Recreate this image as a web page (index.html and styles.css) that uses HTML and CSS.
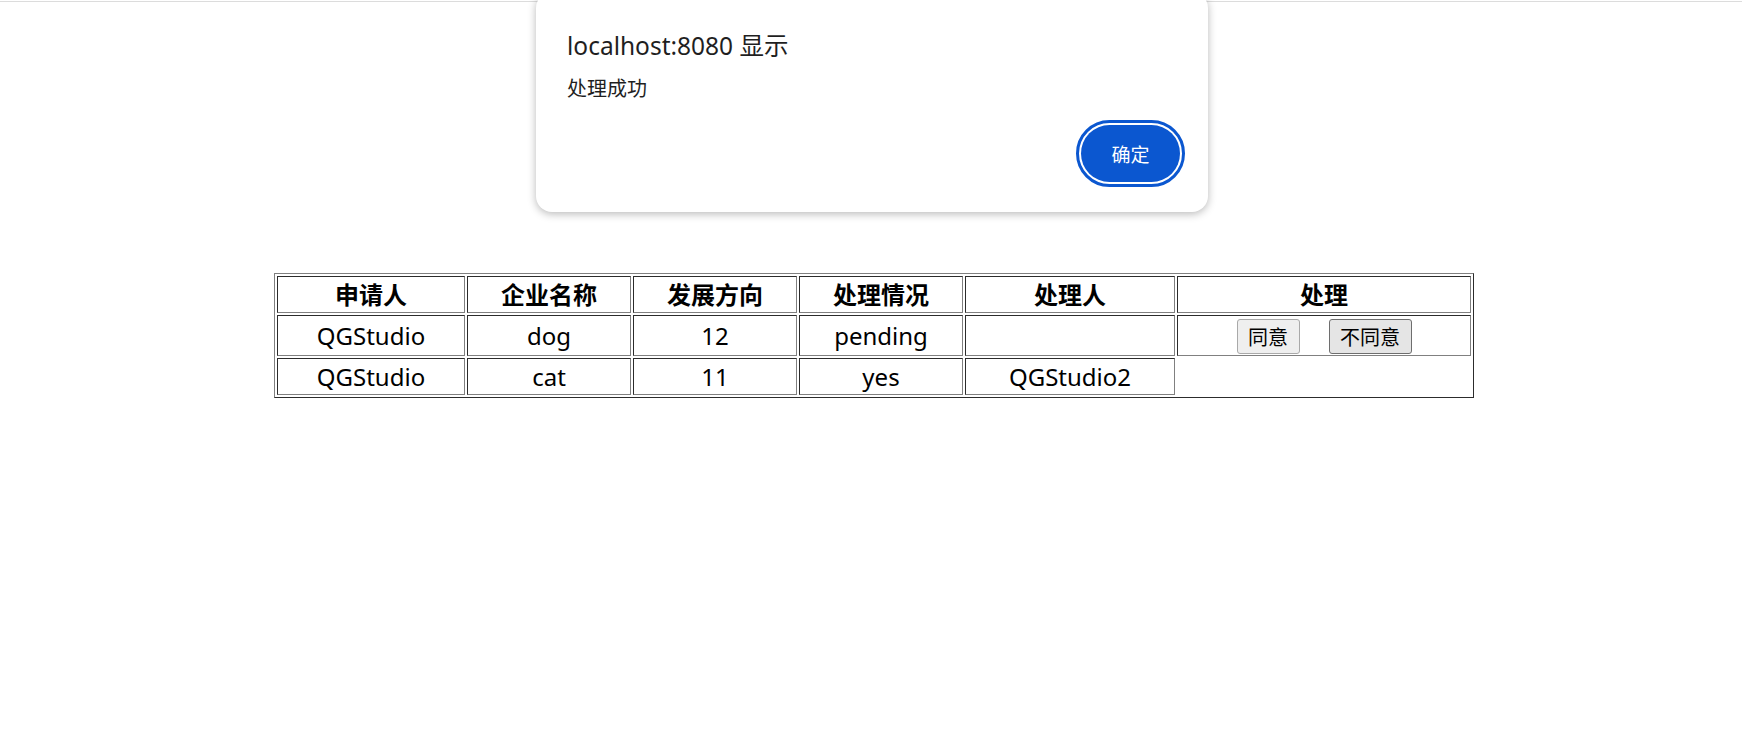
FILE: index.html
```html
<!DOCTYPE html>
<html lang="zh-CN">
<head>
<meta charset="utf-8">
<title>处理</title>
<link rel="stylesheet" href="styles.css">
</head>
<body>
<div class="topline"></div>
<main class="page">
  <table class="grid">
    <thead>
      <tr>
        <th class="c1">申请人</th>
        <th class="c2">企业名称</th>
        <th class="c3">发展方向</th>
        <th class="c4">处理情况</th>
        <th class="c5">处理人</th>
        <th class="c6">处理</th>
      </tr>
    </thead>
    <tbody>
      <tr class="row-btn">
        <td>QGStudio</td>
        <td>dog</td>
        <td>12</td>
        <td>pending</td>
        <td></td>
        <td><button class="btn btn-agree">同意</button><button class="btn btn-reject">不同意</button></td>
      </tr>
      <tr>
        <td>QGStudio</td>
        <td>cat</td>
        <td>11</td>
        <td>yes</td>
        <td>QGStudio2</td>
      </tr>
    </tbody>
  </table>
</main>
<div class="alert" role="alertdialog">
  <div class="alert-title">localhost:8080 显示</div>
  <div class="alert-msg">处理成功</div>
  <div class="alert-actions"><button class="alert-ok">确定</button></div>
</div>
</body>
</html>
```
FILE: styles.css
```css
html, body {
  margin: 0;
  padding: 0;
  background: #ffffff;
}
body {
  font-family: "Noto Sans", "Noto Sans CJK SC", sans-serif;
  color: #000;
}
.topline {
  margin-top: 1px;
  height: 1px;
  background: #dcdcdc;
}
.page {
  padding: 271px 0 0 274px;
}
.grid {
  width: 1200px;
  table-layout: fixed;
  border: 1px outset grey;
  border-spacing: 2px;
  font-size: 24px;
}
.grid th,
.grid td {
  box-sizing: border-box;
  border: 1px inset grey;
  padding: 1px;
  line-height: 33px;
  text-align: center;
  vertical-align: middle;
}
.grid th { font-weight: 700; }
.c1 { width: 188px; }
.c2 { width: 164px; }
.c3 { width: 164px; }
.c4 { width: 164px; }
.c5 { width: 210px; }
.c6 { width: 294px; }
.row-btn td { height: 41px; }
.btn {
  font-family: "Noto Sans CJK SC", sans-serif;
  font-size: 20px;
  height: 35px;
  line-height: 33px;
  padding: 0 10.5px;
  border-radius: 3px;
  color: #000;
  vertical-align: middle;
  margin: 0;
}
.btn-agree {
  background: #efefef;
  border: 1px solid #a9a9a9;
}
.btn-reject {
  margin-left: 29px;
  background: #e5e5e5;
  border: 1px solid #6e6e6e;
}
.alert {
  position: absolute;
  left: 536px;
  top: -8px;
  width: 672px;
  height: 220px;
  box-sizing: border-box;
  padding: 38px 28px 0 31px;
  background: #fff;
  border-radius: 16px;
  box-shadow: 0 2px 8px rgba(0, 0, 0, 0.28);
  display: flex;
  flex-direction: column;
  color: #1f1f1f;
}
.alert-title {
  font-size: 24.5px;
  line-height: 32px;
}
.alert-msg {
  margin-top: 13px;
  font-size: 20px;
  line-height: 28px;
}
.alert-actions {
  margin-top: 22px;
  display: flex;
  justify-content: flex-end;
}
.alert-ok {
  width: 99px;
  height: 57px;
  border: none;
  border-radius: 29px;
  background: #0b57d0;
  color: #fff;
  font-family: "Noto Sans CJK SC", sans-serif;
  font-size: 19px;
  outline: 3px solid #0b57d0;
  outline-offset: 2px;
  padding: 0;
}
```
